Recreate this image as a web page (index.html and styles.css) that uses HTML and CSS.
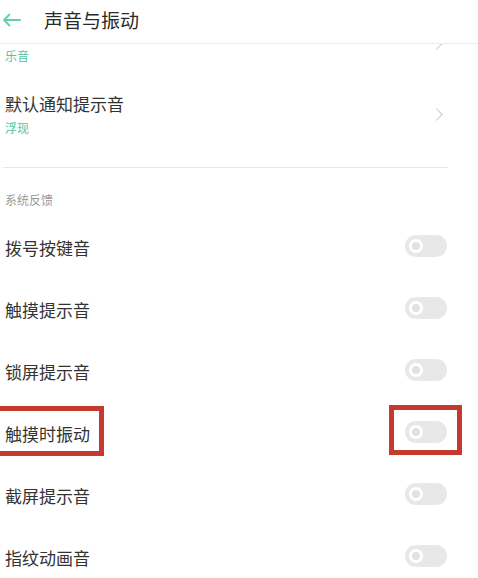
FILE: index.html
```html
<!DOCTYPE html>
<html lang="zh-CN">
  <head>
    <meta charset="UTF-8" />
    <meta name="viewport" content="width=device-width, initial-scale=1.0" />
    <title>声音与振动</title>
    <link rel="stylesheet" href="styles.css">
  </head>
  <body>
    <div class="screen">
      <div class="top-bar">
        <svg class="back-icon" width="20" height="14" viewBox="0 0 20 14">
          <path d="M18 7H2M7.5 1.5L2 7l5.5 5.5" fill="none" stroke="#62d0ae" stroke-width="1.8" stroke-linecap="round" stroke-linejoin="round" />
        </svg>
        <div class="top-title">声音与振动</div>
      </div>

      <div class="scroll-area">
        <!-- first entry is scrolled half under the top bar -->
        <div class="nav-item first">
          <div class="nav-text">
            <div class="nav-sub">乐音</div>
          </div>
          <span class="chevron"></span>
        </div>

        <div class="nav-item">
          <div class="nav-text">
            <div class="nav-title">默认通知提示音</div>
            <div class="nav-sub">浮现</div>
          </div>
          <span class="chevron"></span>
        </div>

        <div class="divider"></div>

        <div class="section-label">系统反馈</div>

        <div class="switch-row">
          <span class="row-label">拨号按键音</span>
          <span class="toggle"><span class="knob"></span></span>
        </div>
        <div class="switch-row">
          <span class="row-label">触摸提示音</span>
          <span class="toggle"><span class="knob"></span></span>
        </div>
        <div class="switch-row">
          <span class="row-label">锁屏提示音</span>
          <span class="toggle"><span class="knob"></span></span>
        </div>
        <div class="switch-row">
          <span class="row-label">触摸时振动</span>
          <span class="toggle"><span class="knob"></span></span>
          <span class="mark-box mark-left"></span>
          <span class="mark-box mark-right"></span>
        </div>
        <div class="switch-row">
          <span class="row-label">截屏提示音</span>
          <span class="toggle"><span class="knob"></span></span>
        </div>
        <div class="switch-row">
          <span class="row-label">指纹动画音</span>
          <span class="toggle"><span class="knob"></span></span>
        </div>
      </div>
    </div>
  </body>
</html>
```

FILE: styles.css
```css
body {
  margin: 0;
  background: #fff;
  font-family: "Noto Sans CJK SC", "Noto Sans", sans-serif;
  color: #333;
}

.screen {
  width: 478px;
  height: 578px;
  overflow: hidden;
  display: flex;
  flex-direction: column;
}

.top-bar {
  height: 43px;
  flex-shrink: 0;
  display: flex;
  align-items: center;
  gap: 22px;
  padding-left: 2px;
  border-bottom: 1px solid #ededed;
  background: #fff;
}

.back-icon {
  margin-top: -4px;
}

.top-title {
  font-size: 19px;
  color: #2a2a2a;
  margin-top: -4px;
}

.scroll-area {
  flex: 1;
  overflow: hidden;
}

.nav-item {
  height: 72px;
  display: flex;
  align-items: center;
  padding: 0 31px 0 5px;
}

.nav-item.first {
  height: 34px;
  align-items: flex-start;
}

.nav-item.first .nav-sub {
  margin-top: 3px;
}

.nav-item.first .chevron {
  margin-top: -5px;
}

.nav-text {
  flex: 1;
}

.nav-title {
  font-size: 17px;
  line-height: 24px;
  color: #333;
}

.nav-sub {
  font-size: 12px;
  line-height: 18px;
  margin-top: 3px;
  color: #4fc6a0;
}

.chevron {
  width: 8px;
  height: 8px;
  border-top: 1.3px solid #c8c8c8;
  border-right: 1.3px solid #c8c8c8;
  transform: rotate(45deg);
  margin-right: 6px;
}

.divider {
  height: 1px;
  background: #e8e8e8;
  margin: 17px 30px 0 3px;
}

.section-label {
  font-size: 12px;
  line-height: 18px;
  color: #9a9a9a;
  padding: 23px 0 7px 5px;
}

.switch-row {
  height: 62px;
  display: flex;
  align-items: center;
  justify-content: space-between;
  padding: 0 31px 0 5px;
  position: relative;
}

.row-label {
  font-size: 17px;
  color: #333;
}

.toggle {
  width: 42px;
  height: 22px;
  border-radius: 11px;
  background: #e8e8e8;
  display: flex;
  align-items: center;
  padding-left: 4px;
  box-sizing: border-box;
  margin-top: -3px;
}

.knob {
  width: 14px;
  height: 14px;
  border-radius: 50%;
  border: 3px solid #fff;
  background: #e2e2e2;
  box-sizing: border-box;
}

/* red annotation frames drawn over the screenshot */
.mark-box {
  position: absolute;
  top: 4px;
  height: 50px;
  border: 5px solid #c43a2f;
  box-sizing: border-box;
}

.mark-left {
  left: -8px;
  width: 112px;
}

.mark-right {
  left: 389px;
  width: 73px;
  top: 3px;
}
```
